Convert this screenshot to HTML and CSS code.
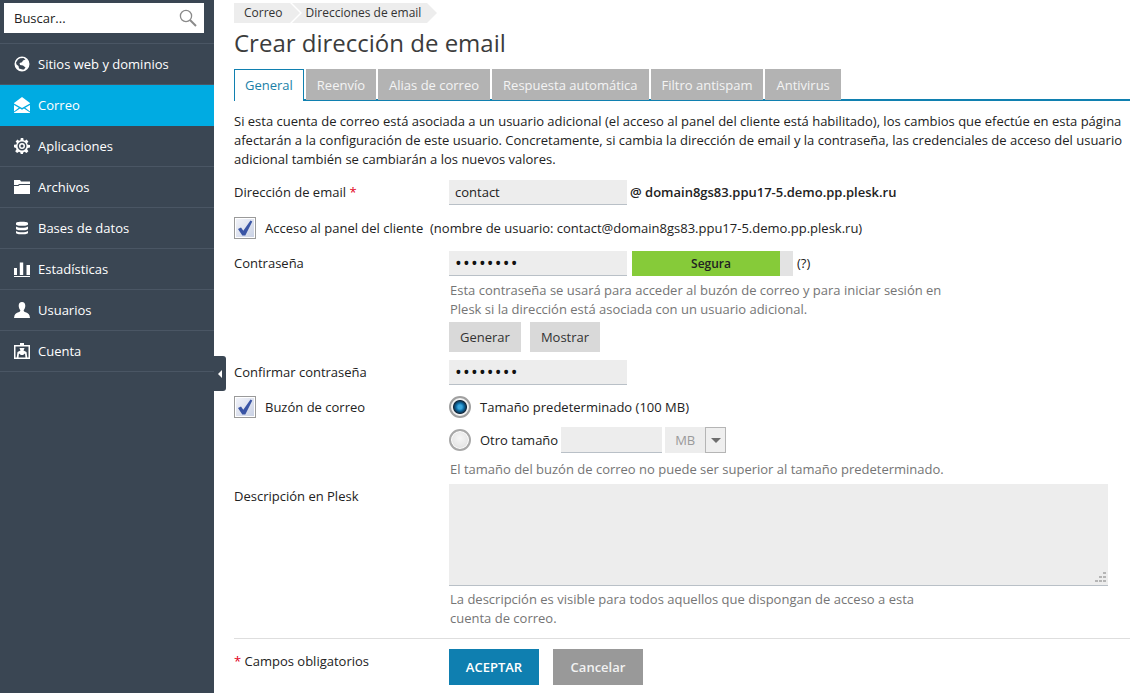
FILE: index.html
```html
<!DOCTYPE html>
<html lang="es">
<head>
<meta charset="utf-8">
<title>Crear dirección de email</title>
<link rel="stylesheet" href="styles.css">
</head>
<body>
<div class="layout">
  <aside class="sidebar">
    <div class="search-wrap">
      <div class="search">
        <span>Buscar...</span>
        <svg class="search-icon" viewBox="0 0 18 18" width="18" height="18"><circle cx="7" cy="7" r="5.6" fill="none" stroke="#8a8a8a" stroke-width="1.3"/><path d="M11 11l6 6" stroke="#8a8a8a" stroke-width="2" fill="none"/></svg>
      </div>
    </div>
    <nav class="nav">
      <a class="nav-item"><svg class="nav-icon" viewBox="0 0 16 16"><path fill-rule="evenodd" d="M8 .5a7.500 7.500 0 1 0 0 15 7.500 7.500 0 0 0 0-15zM6 2.200L9.500 2l2 1.500-2.500 1-1 1.800L5.600 7l.4 2 3 .5 2.500 2-1.500 2H8.500L5 12.500 4.500 10 2.500 8.500 2 6.500 4 3.500z"/></svg><span>Sitios web y dominios</span></a>
      <a class="nav-item active"><svg class="nav-icon" viewBox="0 0 16 16"><path d="M8 0l8 6v.4L8 11 0 6.400V6zM0 8l4.800 2.800L0 14.500zM16 8v6.500l-4.800-3.700zM6 11.500l2 1.200 2-1.200 6 4V16H0v-.5z"/></svg><span>Correo</span></a>
      <a class="nav-item"><svg class="nav-icon" viewBox="0 0 16 16"><path fill-rule="evenodd" d="M6.800 0h2.400l.4 2.200 1.400.6L12.500 1.500l1.900 1.900-1.300 1.900.6 1.400 2.300.4v2.400l-2.300.4-.6 1.400 1.300 1.900-1.900 1.900-1.900-1.300-1.400.6-.4 2.200H6.800l-.4-2.200-1.400-.6-1.900 1.300-1.900-1.900 1.300-1.900-.6-1.400L0 9.200V6.800l2.300-.4.6-1.400L1.600 3.400l1.900-1.900L5 2.800l1.400-.6zM8 3.500a4.500 4.500 0 1 0 0 9 4.500 4.500 0 0 0 0-9zM8 5a3 3 0 1 1 0 6 3 3 0 0 1 0-6zM8 6.500a1.500 1.500 0 1 0 0 3 1.500 1.500 0 0 0 0-3z"/></svg><span>Aplicaciones</span></a>
      <a class="nav-item"><svg class="nav-icon" viewBox="0 0 16 16"><path d="M0 1h6l1 1.500h9V5H5L4 6H0zM0 7h4.500l1-1H16v9H0z"/></svg><span>Archivos</span></a>
      <a class="nav-item"><svg class="nav-icon" viewBox="0 0 16 16"><path d="M2 3c0-1.600 12-1.600 12 0v1.500c0 1.800-12 1.800-12 0zM2 6.500c2 1.700 10 1.700 12 0v2.500c0 1.800-12 1.800-12 0zM2 11c2 1.700 10 1.700 12 0v2c0 1.800-12 1.800-12 0z"/></svg><span>Bases de datos</span></a>
      <a class="nav-item"><svg class="nav-icon" viewBox="0 0 16 16"><path d="M0 7h3v7H0zM5.800 1.500h3.400V14H5.800zM12.500 4H16v10h-3.500zM0 15h16v1H0z"/></svg><span>Estadísticas</span></a>
      <a class="nav-item"><svg class="nav-icon" viewBox="0 0 16 16"><path d="M8 0c2.200 0 3.300 1.600 3.300 3.800 0 1.900-.8 3.300-1.500 4.200-.3.700 0 1.500 1 2 2 .8 4.200 1.500 4.700 3.500l.5 2.500H0l.5-2.500C1 11.500 3.200 10.800 5.200 10c1-.5 1.300-1.300 1-2-.7-.9-1.500-2.300-1.500-4.200C4.700 1.600 5.800 0 8 0z"/></svg><span>Usuarios</span></a>
      <a class="nav-item"><svg class="nav-icon" viewBox="0 0 16 16"><path fill-rule="evenodd" d="M6 0h4v2h6v14H0V2h6zM1.500 3.500v11h1.200L3.500 9 6.500 7.500 5.500 5H10.500L9.500 7.500 12.500 9l.8 5.500h1.200v-11zM5 10.500L4.500 14.500h7L11 10.500 9 12H7z"/></svg><span>Cuenta</span></a>
    </nav>
    <div class="collapse-tab"><span class="collapse-arrow"></span></div>
  </aside>

  <main class="main">
    <div class="breadcrumbs">
      <a class="crumb crumb-first">Correo</a>
      <a class="crumb crumb-last">Direcciones de email</a>
    </div>
    <h1 class="title">Crear dirección de email</h1>
    <div class="tabs">
      <a class="tab active">General</a>
      <a class="tab">Reenvío</a>
      <a class="tab">Alias de correo</a>
      <a class="tab">Respuesta automática</a>
      <a class="tab">Filtro antispam</a>
      <a class="tab">Antivirus</a>
    </div>
    <p class="intro">Si esta cuenta de correo está asociada a un usuario adicional (el acceso al panel del cliente está habilitado), los cambios que efectúe en esta página afectarán a la configuración de este usuario. Concretamente, si cambia la dirección de email y la contraseña, las credenciales de acceso del usuario adicional también se cambiarán a los nuevos valores.</p>

    <div class="row row-email">
      <label class="label">Dirección de email <span class="req">*</span></label>
      <div class="field inline">
        <div class="input w178">contact</div>
        <b class="domain">@ domain8gs83.ppu17-5.demo.pp.plesk.ru</b>
      </div>
    </div>

    <div class="check-row row-access">
      <span class="checkbox"><svg viewBox="0 0 20 20" width="20" height="20"><path d="M3 11l3-1.500 2.300 3.300L15.500 2.500l1.800 1-7 14H7.300z" fill="#3a55a5"/></svg></span>
      <span class="check-label">Acceso al panel del cliente&nbsp; (nombre de usuario: contact@domain8gs83.ppu17-5.demo.pp.plesk.ru)</span>
    </div>

    <div class="row row-pass">
      <label class="label">Contraseña</label>
      <div class="field">
        <div class="inline">
          <div class="input w178 dots">••••••••</div>
          <div class="strength"><div class="strength-fill">Segura</div></div>
          <span class="help">(?)</span>
        </div>
        <p class="hint hint-pass">Esta contraseña se usará para acceder al buzón de correo y para iniciar sesión en Plesk si la dirección está asociada con un usuario adicional.</p>
        <div class="inline btns">
          <a class="btn">Generar</a>
          <a class="btn">Mostrar</a>
        </div>
      </div>
    </div>

    <div class="row row-confirm">
      <label class="label">Confirmar contraseña</label>
      <div class="field"><div class="input w178 dots">••••••••</div></div>
    </div>

    <div class="row row-box">
      <div class="label check-row">
        <span class="checkbox"><svg viewBox="0 0 20 20" width="20" height="20"><path d="M3 11l3-1.500 2.300 3.300L15.500 2.500l1.800 1-7 14H7.300z" fill="#3a55a5"/></svg></span>
        <span class="check-label">Buzón de correo</span>
      </div>
      <div class="field">
        <div class="inline radio-row">
          <span class="radio on"></span>
          <span class="radio-label">Tamaño predeterminado (100 MB)</span>
        </div>
        <div class="inline radio-row2">
          <span class="radio"></span>
          <span class="radio-label">Otro tamaño</span>
          <div class="input w101 size-input"></div>
          <div class="select"><span class="select-val">MB</span><span class="select-btn"><span class="select-arrow"></span></span></div>
        </div>
        <p class="hint hint-size">El tamaño del buzón de correo no puede ser superior al tamaño predeterminado.</p>
      </div>
    </div>

    <div class="row row-desc">
      <label class="label">Descripción en Plesk</label>
      <div class="field">
        <div class="textarea"><svg class="grip" viewBox="0 0 11 11" width="11" height="11"><path d="M8 0h3v2H8zM4 4h3v2H4zM8 4h3v2H8zM0 8h3v2H0zM4 8h3v2H4zM8 8h3v2H8z" fill="#b5b5b5"/></svg></div>
        <p class="hint hint-desc">La descripción es visible para todos aquellos que dispongan de acceso a esta cuenta de correo.</p>
      </div>
    </div>

    <div class="footer">
      <div class="label"><span class="req">*</span> Campos obligatorios</div>
      <div class="inline">
        <a class="action primary">ACEPTAR</a>
        <a class="action secondary">Cancelar</a>
      </div>
    </div>
  </main>
</div>
</body>
</html>
```
FILE: styles.css
```css
* { box-sizing: border-box; }
html, body { margin: 0; padding: 0; height: 100%; }
body { font-family: "Open Sans", sans-serif; font-size: 13px; line-height: 19px; color: #222; background: #fff; overflow: hidden; }
.layout { display: flex; height: 693px; }

.sidebar { position: relative; flex: 0 0 214px; background: #3a4653; color: #fff; }
.search-wrap { padding: 3px 10px 10px 4px; height: 44px; border-bottom: 1px solid #4a5664; }
.search { display: flex; align-items: center; justify-content: space-between; height: 30px; background: #fff; color: #222; padding: 0 7px 0 10px; }
.search-icon { display: block; margin-top: -1px; }
.nav-item { display: flex; align-items: center; gap: 8px; height: 41px; padding: 0 0 0 14px; border-bottom: 1px solid #4a5664; color: #fff; }
.nav-item.active { background: #00abe2; border-bottom-color: #00abe2; }
.nav-icon { width: 16px; height: 16px; fill: #fff; flex: none; }
.collapse-tab { position: absolute; left: 214px; top: 356px; width: 12px; height: 35px; background: #3a4653; border-radius: 0 3px 3px 0; display: flex; align-items: center; justify-content: center; }
.collapse-arrow { width: 0; height: 0; border: 4px solid transparent; border-left: 0; border-right: 4px solid #fff; }

.main { flex: 1; min-width: 0; padding: 3px 0 0 20px; }
.breadcrumbs { display: flex; height: 20px; font-size: 12px; line-height: 20px; }
.crumb { position: relative; background: #ededed; color: #333; }
.crumb-first { padding: 0 7px 0 10px; }
.crumb-first::after { content: ""; position: absolute; left: 100%; top: 0; border-style: solid; border-width: 10px 0 10px 10px; border-color: transparent transparent transparent #ededed; z-index: 1; }
.crumb-last { margin-left: 2px; padding: 0 6px 0 14px; }
.crumb-last::before { content: ""; position: absolute; left: 0; top: 0; border-style: solid; border-width: 10px 0 10px 10px; border-color: transparent transparent transparent #fff; }
.crumb-last::after { content: ""; position: absolute; left: 100%; top: 0; border-style: solid; border-width: 10px 0 10px 10px; border-color: transparent transparent transparent #ededed; }
.title { margin: 4px 0 0; font-size: 24px; line-height: 32px; font-weight: 400; color: #3c3c3c; }
.tabs { display: flex; gap: 2px; margin-top: 10px; height: 32px; border-bottom: 2px solid #1080b0; }
.tab { height: 31px; line-height: 32px; padding: 0 11px; background: #b3b3b3; color: #f4f4f4; }
.tab.active { height: 32px; background: #fff; color: #1a7fa8; border: 1px solid #1080b0; border-bottom: 0; padding: 0 10px; line-height: 31px; }
.intro { margin: 11px 0 0; width: 896px; color: #222; }

.row { display: flex; }
.label { flex: 0 0 215px; color: #222; }
.field { flex: 1; min-width: 0; }
.inline { display: flex; align-items: center; }
.req { color: #e2001a; }

.input { height: 25px; line-height: 24px; padding: 0 6px; background: #ededed; border-bottom: 1px solid #b9c0c7; color: #222; }
.w178 { width: 178px; flex: none; }
.dots { font-size: 18px; letter-spacing: 1.2px; color: #111; }
.domain { margin-left: 3px; font-weight: 600; color: #222; }

.row-email { margin-top: 11px; }
.row-email .label { padding-top: 3px; }
.check-row { display: flex; align-items: center; }
.row-access { margin-top: 11px; height: 24px; }
.checkbox { display: block; flex: none; width: 22px; height: 22px; border: 1px solid #9a9a9a; background: linear-gradient(135deg, #f4f5fa, #c8d0e4); margin-right: 9px; box-shadow: inset 0 0 0 1px #fff; }
.checkbox svg { display: block; }
.check-label { color: #222; }

.row-pass { margin-top: 11px; }
.row-pass .label { padding-top: 3px; }
.strength { width: 161px; height: 25px; margin-left: 5px; background: #e3e3e3; }
.strength-fill { width: 148px; height: 25px; line-height: 25px; background: #86cb39; padding-left: 10px; text-align: center; font-size: 12px; font-weight: 600; color: #222; }
.help { margin-left: 4px; color: #222; }
.hint { margin: 0; padding-left: 1px; color: #757575; }
.hint-pass { margin-top: 5px; width: 500px; }
.btns { gap: 9px; margin-top: 3px; }
.btn { display: block; height: 30px; line-height: 30px; padding: 0 11px; background: #d9d9d9; color: #333; }

.row-confirm { margin-top: 8px; }
.row-confirm .label { padding-top: 3px; }
.row-box { margin-top: 10px; }
.row-box .label { align-self: flex-start; height: 24px; }
.radio-row { height: 24px; }
.radio-row2 { height: 26px; margin-top: 8px; }
.radio { display: block; flex: none; width: 22px; height: 22px; border-radius: 50%; border: 2px solid #a8a8a8; background: radial-gradient(circle at 50% 40%, #f6f6f6, #dcdcdc); margin-right: 9px; box-shadow: inset 0 0 0 1px #fff; }
.radio.on { border-color: #a0a0a0; background: radial-gradient(circle at 50% 50%, #3aa6dc 0 2px, #0d6aa3 4px, #12283c 6.500px, #f2f2f2 7.500px); box-shadow: none; }
.size-input { width: 101px; margin-left: 3px; height: 26px; }
.select { display: flex; height: 26px; margin-left: 3px; background: #ededed; flex: none; }
.select-val { width: 40px; text-align: center; line-height: 26px; color: #9a9a9a; }
.select-btn { width: 21px; border: 1px solid #b5b5b5; background: #efefef; display: flex; align-items: center; justify-content: center; }
.select-arrow { width: 0; height: 0; border: 5px solid transparent; border-bottom: 0; border-top: 5px solid #6e6e6e; }
.hint-size { margin-top: 7px; }

.row-desc { margin-top: 5px; }
.row-desc .label { padding-top: 3px; }
.textarea { position: relative; width: 659px; height: 102px; background: #ededed; border-bottom: 1px solid #b9c0c7; }
.grip { position: absolute; right: 2px; bottom: 2px; display: block; }
.hint-desc { margin-top: 4px; width: 480px; }

.footer { display: flex; margin-top: 10px; padding-top: 10px; border-top: 1px solid #dedede; }
.footer .label { padding-top: 3px; }
.action { display: block; height: 36px; line-height: 36px; text-align: center; font-weight: 600; color: #fff; }
.primary { width: 90px; background: #0f7fb0; }
.secondary { width: 90px; margin-left: 14px; background: #999; color: #f2f2f2; }
```
